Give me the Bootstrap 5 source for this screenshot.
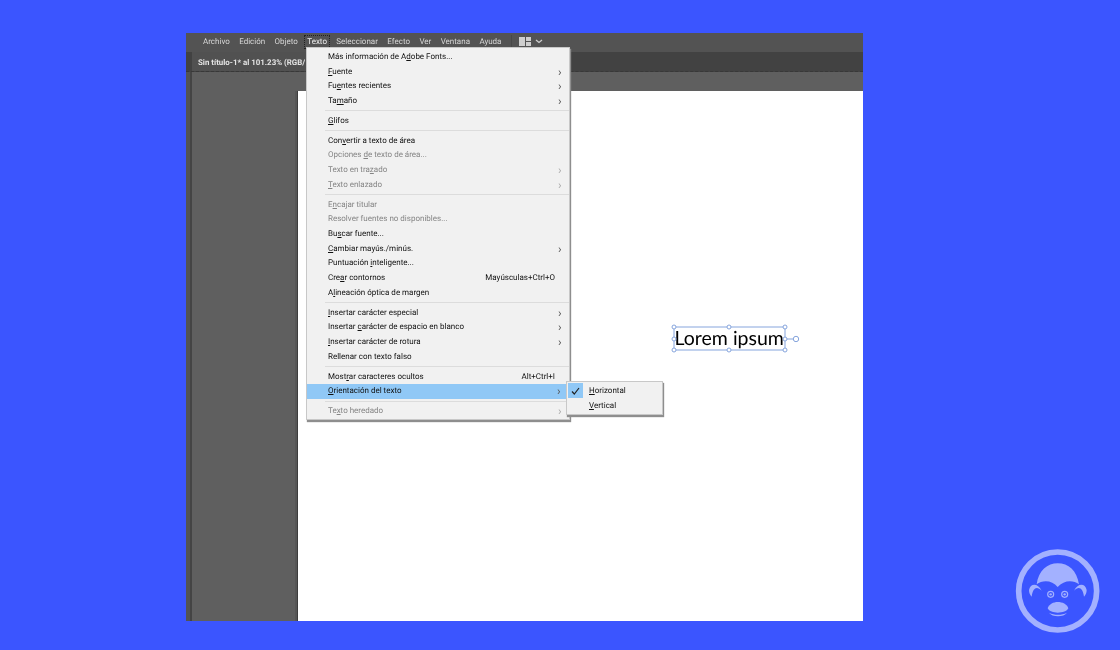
<!DOCTYPE html>
<html lang="es">
<head>
<meta charset="utf-8">
<title>Orientación del texto</title>
<link href="https://cdn.jsdelivr.net/npm/bootstrap@5.3.0/dist/css/bootstrap.min.css" rel="stylesheet">
<style>
html,body{height:650px;overflow:hidden}
body{background:#3b55ff;font-family:Roboto,"Noto Sans",sans-serif;font-size:8px;line-height:1;padding:33px 0 0 186px;position:relative;text-rendering:geometricPrecision}
.ai-app{width:677px;height:588px;position:relative;background:#5f5f5f;filter:blur(.3px)}
.ai-menubar{height:19px;background:#535353;color:#d6d6d6;padding:0 0 2px 17px}
.ai-menubar span.ai-top{margin-right:9.4px;white-space:nowrap}
.ai-active{outline:1px dotted #222;outline-offset:2px;color:#eee}
.ai-vline{width:1px;height:14px;background:#484848;margin:0 7px 0 0}
.ai-tabs{height:20px;background:#424242;border-bottom:1px dashed #383838}
.ai-tab{width:114px;margin-left:6px;background:#515151;color:#e4e4e4;font-weight:700;font-size:7.9px;padding:3px 0 0 6px;white-space:nowrap}
.ai-work{min-height:0}
.ai-tools{width:6px;background:#535353;border-right:2px solid #444}
.ai-pasteboard{padding:19px 0 0 105px}
.ai-doc{background:#fff;border-left:1px solid #3d3d3d;box-shadow:-2px 0 0 #565656;position:relative}
.ai-menu,.ai-submenu{position:absolute;background:#f1f1f1;border:1px solid #c8c8c8;box-shadow:1px 2px 1px #8e8e8e;color:#111}
.ai-menu{left:120px;top:14px;width:264px;height:373px;padding-top:1.6px}
.ai-submenu{left:380px;top:348px;width:97px;height:34px;padding-top:2px}
.ai-row{height:14.7px;padding:0 5px 0 21px;white-space:nowrap}
.ai-row.ai-off{color:#858585}
.ai-row.ai-hot{background:#90c8f6;margin-right:1px}
.ai-sep{height:5.2px;display:flex;align-items:center;padding-left:18px}
.ai-sep::after{content:"";display:block;height:1px;width:100%;background:#dcdcdc}
.ai-arrow{width:6px;margin-left:auto;color:#555;font-size:12px}
.ai-off .ai-arrow{color:#aaa}
.ai-key{margin-left:auto;margin-right:9px}
.ai-subrow{height:14.7px;padding-left:22px;white-space:nowrap}
.ai-check{position:absolute;left:1px;top:1px;width:15px;height:15px;background:#90c8f6}
.ai-lorem{position:absolute;left:488.5px;top:296px;font-family:Lato,sans-serif;font-size:19.5px;line-height:1;color:#000;white-space:nowrap}
.ai-handles{position:absolute;left:484px;top:290px}
.ai-logo{position:absolute;left:1005px;top:540px}
</style>
</head>
<body>
<div class="ai-app d-flex flex-column">
  <div class="ai-menubar d-flex align-items-center flex-shrink-0">
    <span class="ai-top">Archivo</span><span class="ai-top">Edición</span><span class="ai-top">Objeto</span><span class="ai-top ai-active">Texto</span><span class="ai-top">Seleccionar</span><span class="ai-top">Efecto</span><span class="ai-top">Ver</span><span class="ai-top">Ventana</span><span class="ai-top">Ayuda</span>
    <span class="ai-vline"></span>
    <svg width="24" height="9" viewBox="0 0 24 9"><path fill="#cfcfcf" d="M0 0h6v9H0zM7 0h5v4H7zM7 5h5v4H7z"/><path fill="none" stroke="#cfcfcf" stroke-width="1.3" d="M17 3l3 2.5L23 3"/></svg>
  </div>
  <div class="ai-tabs d-flex flex-shrink-0">
    <div class="ai-tab d-flex align-items-center">Sin título-1* al 101.23% (RGB/</div>
  </div>
  <div class="ai-work d-flex flex-grow-1">
    <div class="ai-tools flex-shrink-0"></div>
    <div class="ai-pasteboard d-flex flex-grow-1">
      <div class="ai-doc flex-grow-1"></div>
    </div>
  </div>

  <div class="ai-menu">
    <div class="ai-row d-flex align-items-center">Más información de A<u>d</u>obe Fonts...</div>
    <div class="ai-row d-flex align-items-center"><span><u>F</u>uente</span><span class="ai-arrow">›</span></div>
    <div class="ai-row d-flex align-items-center"><span>Fu<u>e</u>ntes recientes</span><span class="ai-arrow">›</span></div>
    <div class="ai-row d-flex align-items-center"><span>Ta<u>m</u>año</span><span class="ai-arrow">›</span></div>
    <div class="ai-sep"></div>
    <div class="ai-row d-flex align-items-center"><span><u>G</u>lifos</span></div>
    <div class="ai-sep"></div>
    <div class="ai-row d-flex align-items-center"><span>Con<u>v</u>ertir a texto de área</span></div>
    <div class="ai-row ai-off d-flex align-items-center"><span>Opciones <u>d</u>e texto de área...</span></div>
    <div class="ai-row ai-off d-flex align-items-center"><span>Texto en tra<u>z</u>ado</span><span class="ai-arrow">›</span></div>
    <div class="ai-row ai-off d-flex align-items-center"><span><u>T</u>exto enlazado</span><span class="ai-arrow">›</span></div>
    <div class="ai-sep"></div>
    <div class="ai-row ai-off d-flex align-items-center"><span>E<u>n</u>cajar titular</span></div>
    <div class="ai-row ai-off d-flex align-items-center"><span>Resolver fuentes no disponibles...</span></div>
    <div class="ai-row d-flex align-items-center"><span>Bu<u>s</u>car fuente...</span></div>
    <div class="ai-row d-flex align-items-center"><span><u>C</u>ambiar mayús./minús.</span><span class="ai-arrow">›</span></div>
    <div class="ai-row d-flex align-items-center"><span>Puntuación <u>i</u>nteligente...</span></div>
    <div class="ai-row d-flex align-items-center"><span>Cre<u>a</u>r contornos</span><span class="ai-key">Mayúsculas+Ctrl+O</span></div>
    <div class="ai-row d-flex align-items-center"><span>A<u>l</u>ineación óptica de margen</span></div>
    <div class="ai-sep"></div>
    <div class="ai-row d-flex align-items-center"><span><u>I</u>nsertar carácter especial</span><span class="ai-arrow">›</span></div>
    <div class="ai-row d-flex align-items-center"><span>Insertar <u>c</u>arácter de espacio en blanco</span><span class="ai-arrow">›</span></div>
    <div class="ai-row d-flex align-items-center"><span><u>I</u>nsertar carácter de rotura</span><span class="ai-arrow">›</span></div>
    <div class="ai-row d-flex align-items-center"><span>Rellenar con texto falso</span></div>
    <div class="ai-sep"></div>
    <div class="ai-row d-flex align-items-center"><span>Most<u>r</u>ar caracteres ocultos</span><span class="ai-key">Alt+Ctrl+I</span></div>
    <div class="ai-row ai-hot d-flex align-items-center"><span><u>O</u>rientación del texto</span><span class="ai-arrow">›</span></div>
    <div class="ai-sep"></div>
    <div class="ai-row ai-off d-flex align-items-center"><span>Te<u>x</u>to heredado</span><span class="ai-arrow">›</span></div>
  </div>

  <div class="ai-submenu">
    <div class="ai-check d-flex align-items-center justify-content-center">
      <svg width="9" height="8" viewBox="0 0 9 8"><path fill="none" stroke="#222" stroke-width="1.2" d="M1 4.5L3.3 7 8 1"/></svg>
    </div>
    <div class="ai-subrow d-flex align-items-center"><span><u>H</u>orizontal</span></div>
    <div class="ai-subrow d-flex align-items-center"><span><u>V</u>ertical</span></div>
  </div>

  <div class="ai-lorem">Lorem ipsum</div>
  <svg class="ai-handles" width="132" height="30" viewBox="0 0 132 30">
    <g fill="#fff" stroke="#86a5dd" stroke-width="1">
      <path fill="none" d="M4 4H115V27H4ZM115 16H123"/>
      <circle cx="4" cy="4" r="2"/><circle cx="59" cy="4" r="2"/><circle cx="115" cy="4" r="2"/>
      <circle cx="4" cy="16" r="2"/><circle cx="115" cy="16" r="2"/>
      <circle cx="4" cy="27" r="2"/><circle cx="59" cy="27" r="2"/><circle cx="115" cy="27" r="2"/>
      <circle cx="126" cy="16" r="2.7"/>
    </g>
  </svg>
</div>

<svg class="ai-logo" width="115" height="100" viewBox="0 0 345 300" aria-label="logo">
  <circle cx="158" cy="153" r="117" fill="none" stroke="#a3b1ff" stroke-width="17"/>
  <g fill="#a3b1ff">
    <path d="M95 133C100 92 128 70 158 70C190 70 216 92 222 133C205 119 176 120 158 141C142 120 112 119 95 133Z"/>
    <path d="M72 150C76 130 98 128 110 152C96 138 84 142 80 170C75 165 72 158 72 150Z"/>
    <path d="M245 150C241 130 219 128 207 152C221 138 233 142 237 170C242 165 245 158 245 150Z"/>
    <path d="M128 205C132 192 146 186 158 186C172 186 186 192 190 205C186 214 172 218 158 218C146 218 132 214 128 205Z"/>
    <path d="M132 218C148 226 170 226 186 218C176 232 142 232 132 218Z"/>
    <circle cx="179" cy="163" r="3.5"/><circle cx="137" cy="163" r="3.5"/>
  </g>
  <g fill="none" stroke="#a3b1ff" stroke-width="3.5">
    <circle cx="137" cy="163" r="9"/><circle cx="179" cy="163" r="9"/>
  </g>
</svg>
</body>
</html>
